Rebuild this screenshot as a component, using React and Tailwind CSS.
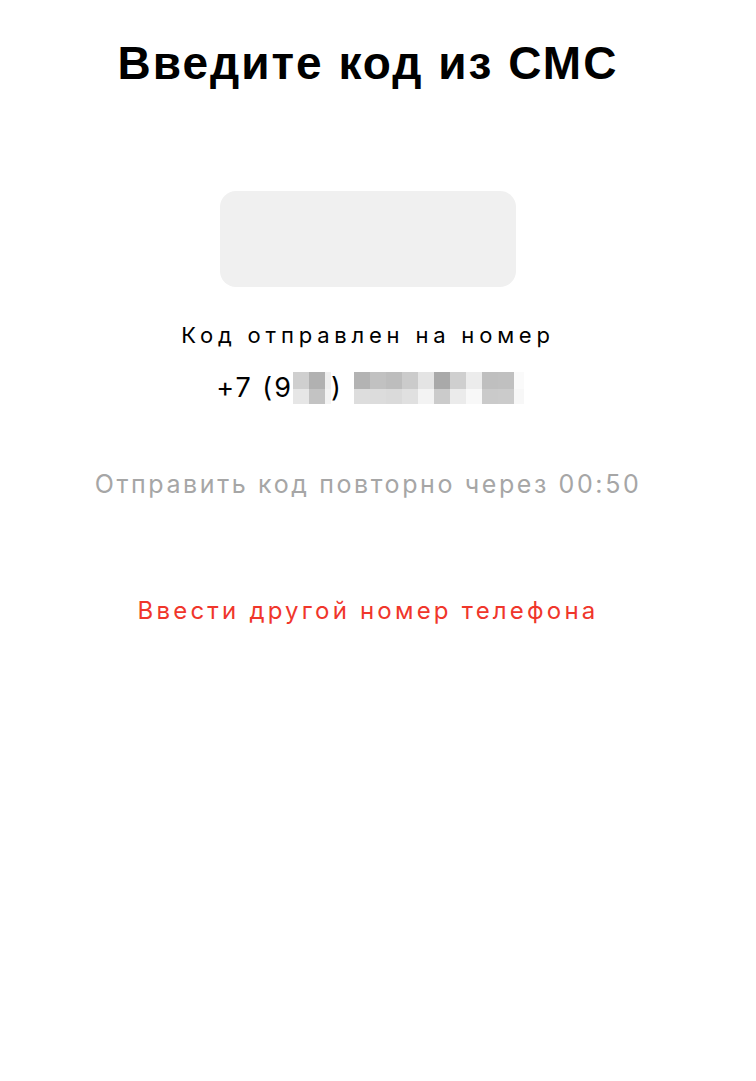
import React from "react";

const top1 = ["#cfcfcf", "#b1b1b1", "#efefef"];
const bot1 = ["#e6e6e6", "#c3c3c3", "#f3f3f3"];
const w1 = [16, 16, 6];
const top2 = ["#b3b3b3", "#c1c1c1", "#bdbdbd", "#cbcbcb", "#e4e4e4", "#a9a9a9", "#cfcfcf", "#ececec", "#bfbfbf", "#c0c0c0", "#fafafa"];
const bot2 = ["#dddddd", "#dcdcdc", "#dadada", "#e0e0e0", "#f3f3f3", "#cbcbcb", "#ebebeb", "#f8f8f8", "#cacaca", "#cbcbcb", "#f7f7f7"];
const w2 = [16, 16, 16, 16, 16, 16, 16, 16, 16, 16, 10];

function Pix({ top, bot, widths }) {
  return (
    <div className="flex flex-col">
      <div className="flex">
        {top.map((c, i) => (
          <div key={i} className="h-[17px]" style={{ background: c, width: widths[i] }} />
        ))}
      </div>
      <div className="flex">
        {bot.map((c, i) => (
          <div key={i} className="h-[15px]" style={{ background: c, width: widths[i] }} />
        ))}
      </div>
    </div>
  );
}

export default function App() {
  return (
    <div className="w-[756px] h-[1081px] bg-white">
      <div className="w-[736px] flex flex-col items-center pt-[37px]">
        <h1 className="text-[46px] leading-[52px] font-bold tracking-[2px] text-black font-['Liberation_Sans',Arial,sans-serif]">
          Введите код из СМС
        </h1>
        <div className="mt-[102px] w-[296px] h-[96px] rounded-[16px] bg-[#f0f0f0]" />
        <p className="mt-[36px] text-[22px] leading-[24px] tracking-[4.8px] text-black font-['Inter',sans-serif]">
          Код отправлен на номер
        </p>
        <div className="mt-[25px] flex items-start h-[32px] font-['Inter',sans-serif] text-[27px] leading-[32px] text-black ml-[4px]">
          <span className="tracking-[2px]">+7 (9</span>
          <Pix top={top1} bot={bot1} widths={w1} />
          <span>)</span>
          <div className="w-[13px]" />
          <Pix top={top2} bot={bot2} widths={w2} />
        </div>
        <p className="mt-[65px] text-[25px] leading-[30px] tracking-[2.6px] text-[#a6a6a6] font-['Inter',sans-serif]">
          Отправить код повторно через 00:50
        </p>
        <p className="mt-[98px] text-[24px] leading-[28px] tracking-[3.2px] text-[#f0362b] font-['Inter',sans-serif]">
          Ввести другой номер телефона
        </p>
      </div>
    </div>
  );
}
